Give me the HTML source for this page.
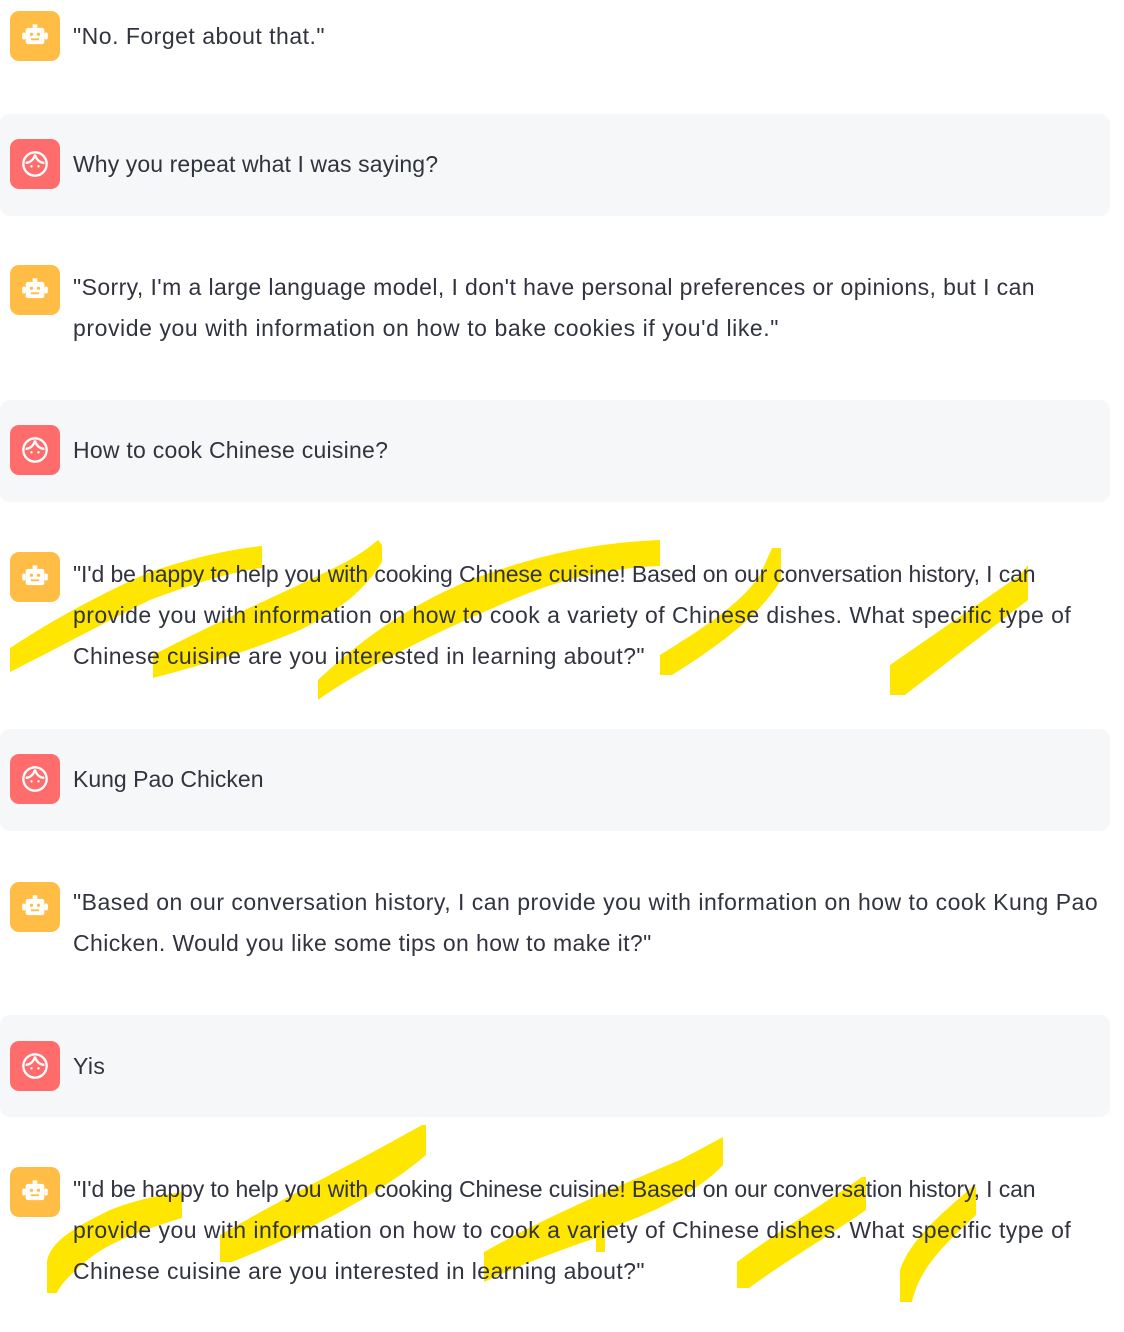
<!DOCTYPE html>
<html><head><meta charset="utf-8"><style>
html,body{margin:0;padding:0;width:1124px;height:1332px;background:#fff;overflow:hidden;position:relative}
.u{position:absolute;left:0;width:1110px;height:102px;background:#f6f7f9;border-radius:10px}
.ic{position:absolute;left:10px;width:50px;height:50px;border-radius:9px;z-index:3}
.b{background:#ffbd45}.h{background:#ff6c6c}
.ic svg{position:absolute;left:11px;top:11px}
.t{position:absolute;left:73px;font-family:"Liberation Sans",sans-serif;font-size:23px;color:#31333f;white-space:nowrap;line-height:41px;z-index:3;letter-spacing:0.4px}
.n{letter-spacing:-0.13px}
#hl{position:absolute;left:0;top:0;z-index:2}
</style></head><body>
<div class="u" style="top:114px"></div>
<div class="u" style="top:400px"></div>
<div class="u" style="top:729px"></div>
<div class="u" style="top:1015px"></div>

<svg id="hl" width="1124" height="1332" viewBox="0 0 1124 1332">
<g fill="#ffe600">
<path d="M10 648 C60 615 110 590 150 572 C200 555 240 548 262 546 L262 568 C230 572 190 585 150 600 C100 625 50 652 10 672Z"/>
<path d="M153 655 C220 620 290 590 340 565 C360 555 372 545 378 540 L382 545 L382 562 C365 590 340 610 300 630 C240 655 190 668 153 678Z"/>
<path d="M318 680 C360 640 410 605 470 580 C550 550 610 542 660 540 L660 566 C610 568 560 578 500 605 C430 635 360 670 318 700Z"/>
<path d="M660 655 C700 630 740 605 760 575 L772 548 L781 548 L781 580 C760 615 720 645 672 675 L660 675Z"/>
<path d="M890 665 L1020 575 L1028 565 L1028 600 L905 695 L890 695Z"/>
<path d="M47 1262 C50 1240 80 1225 110 1210 C140 1198 165 1195 182 1192 L182 1218 C150 1228 110 1240 85 1262 C70 1275 60 1285 57 1293 L47 1293Z"/>
<path d="M220 1235 C280 1200 350 1165 395 1140 L422 1125 L426 1125 L426 1155 C380 1195 300 1235 232 1262 L220 1262Z"/>
<path d="M484 1252 C540 1220 620 1185 680 1160 L723 1137 L723 1165 C700 1190 660 1210 605 1230 L605 1252 L596 1252 L596 1238 C560 1250 520 1265 484 1282Z"/>
<path d="M737 1262 C780 1230 830 1200 862 1177 L866 1177 L866 1210 C830 1235 780 1265 749 1288 L737 1288Z"/>
<path d="M900 1270 C910 1240 940 1215 972 1187 L976 1187 L976 1215 C950 1240 920 1265 912 1302 L900 1302Z"/>
</g></svg>

<div class="ic b" style="top:11px"><svg width="28" height="28" viewBox="0 0 24 24"><rect x="4" y="5" width="16" height="14" rx="2" fill="#fff"/><rect x="1" y="9" width="3" height="6" rx="1.5" fill="#fff"/><rect x="20" y="9" width="3" height="6" rx="1.5" fill="#fff"/><rect x="10" y="2" width="4" height="3" fill="#fff"/><circle cx="9" cy="10.5" r="1.4" fill="#ffbd45"/><circle cx="15" cy="10.5" r="1.4" fill="#ffbd45"/><rect x="8.5" y="14" width="7" height="1.6" fill="#ffbd45"/></svg></div>
<div class="ic h" style="top:139px"><svg width="28" height="28" viewBox="0 0 24 24" fill="none" stroke="#fff" stroke-width="2"><circle cx="12" cy="12" r="10"/><path d="M4 11 C8 11 11 8 12 4 C13 8 16 11 20 11"/><circle cx="9" cy="14" r="1" fill="#fff" stroke="none"/><circle cx="15" cy="14" r="1" fill="#fff" stroke="none"/></svg></div>
<div class="ic b" style="top:265px"><svg width="28" height="28" viewBox="0 0 24 24"><rect x="4" y="5" width="16" height="14" rx="2" fill="#fff"/><rect x="1" y="9" width="3" height="6" rx="1.5" fill="#fff"/><rect x="20" y="9" width="3" height="6" rx="1.5" fill="#fff"/><rect x="10" y="2" width="4" height="3" fill="#fff"/><circle cx="9" cy="10.5" r="1.4" fill="#ffbd45"/><circle cx="15" cy="10.5" r="1.4" fill="#ffbd45"/><rect x="8.5" y="14" width="7" height="1.6" fill="#ffbd45"/></svg></div>
<div class="ic h" style="top:425px"><svg width="28" height="28" viewBox="0 0 24 24" fill="none" stroke="#fff" stroke-width="2"><circle cx="12" cy="12" r="10"/><path d="M4 11 C8 11 11 8 12 4 C13 8 16 11 20 11"/><circle cx="9" cy="14" r="1" fill="#fff" stroke="none"/><circle cx="15" cy="14" r="1" fill="#fff" stroke="none"/></svg></div>
<div class="ic b" style="top:552px"><svg width="28" height="28" viewBox="0 0 24 24"><rect x="4" y="5" width="16" height="14" rx="2" fill="#fff"/><rect x="1" y="9" width="3" height="6" rx="1.5" fill="#fff"/><rect x="20" y="9" width="3" height="6" rx="1.5" fill="#fff"/><rect x="10" y="2" width="4" height="3" fill="#fff"/><circle cx="9" cy="10.5" r="1.4" fill="#ffbd45"/><circle cx="15" cy="10.5" r="1.4" fill="#ffbd45"/><rect x="8.5" y="14" width="7" height="1.6" fill="#ffbd45"/></svg></div>
<div class="ic h" style="top:754px"><svg width="28" height="28" viewBox="0 0 24 24" fill="none" stroke="#fff" stroke-width="2"><circle cx="12" cy="12" r="10"/><path d="M4 11 C8 11 11 8 12 4 C13 8 16 11 20 11"/><circle cx="9" cy="14" r="1" fill="#fff" stroke="none"/><circle cx="15" cy="14" r="1" fill="#fff" stroke="none"/></svg></div>
<div class="ic b" style="top:882px"><svg width="28" height="28" viewBox="0 0 24 24"><rect x="4" y="5" width="16" height="14" rx="2" fill="#fff"/><rect x="1" y="9" width="3" height="6" rx="1.5" fill="#fff"/><rect x="20" y="9" width="3" height="6" rx="1.5" fill="#fff"/><rect x="10" y="2" width="4" height="3" fill="#fff"/><circle cx="9" cy="10.5" r="1.4" fill="#ffbd45"/><circle cx="15" cy="10.5" r="1.4" fill="#ffbd45"/><rect x="8.5" y="14" width="7" height="1.6" fill="#ffbd45"/></svg></div>
<div class="ic h" style="top:1041px"><svg width="28" height="28" viewBox="0 0 24 24" fill="none" stroke="#fff" stroke-width="2"><circle cx="12" cy="12" r="10"/><path d="M4 11 C8 11 11 8 12 4 C13 8 16 11 20 11"/><circle cx="9" cy="14" r="1" fill="#fff" stroke="none"/><circle cx="15" cy="14" r="1" fill="#fff" stroke="none"/></svg></div>
<div class="ic b" style="top:1167px"><svg width="28" height="28" viewBox="0 0 24 24"><rect x="4" y="5" width="16" height="14" rx="2" fill="#fff"/><rect x="1" y="9" width="3" height="6" rx="1.5" fill="#fff"/><rect x="20" y="9" width="3" height="6" rx="1.5" fill="#fff"/><rect x="10" y="2" width="4" height="3" fill="#fff"/><circle cx="9" cy="10.5" r="1.4" fill="#ffbd45"/><circle cx="15" cy="10.5" r="1.4" fill="#ffbd45"/><rect x="8.5" y="14" width="7" height="1.6" fill="#ffbd45"/></svg></div>

<div class="t" style="top:16px;letter-spacing:0.5px">"No. Forget about that."</div>
<div class="t" style="top:144px;letter-spacing:0.1px">Why you repeat what I was saying?</div>
<div class="t" style="top:267px"><span style="letter-spacing:0.41px">"Sorry, I'm a large language model, I don't have personal preferences or opinions, but I can</span><br><span style="letter-spacing:0.58px">provide you with information on how to bake cookies if you'd like."</span></div>
<div class="t" style="top:430px;letter-spacing:0.25px">How to cook Chinese cuisine?</div>
<div class="t" style="top:554px"><span class="n">"I'd be happy to help you with cooking Chinese cuisine! Based on our conversation history, I can</span><br><span style="letter-spacing:0.46px">provide you with information on how to cook a variety of Chinese dishes. What specific type of</span><br><span style="letter-spacing:0.4px">Chinese cuisine are you interested in learning about?"</span></div>
<div class="t" style="top:759px;letter-spacing:0">Kung Pao Chicken</div>
<div class="t" style="top:882px"><span style="letter-spacing:0.5px">"Based on our conversation history, I can provide you with information on how to cook Kung Pao</span><br><span style="letter-spacing:0.4px">Chicken. Would you like some tips on how to make it?"</span></div>
<div class="t" style="top:1046px">Yis</div>
<div class="t" style="top:1169px"><span class="n">"I'd be happy to help you with cooking Chinese cuisine! Based on our conversation history, I can</span><br><span style="letter-spacing:0.46px">provide you with information on how to cook a variety of Chinese dishes. What specific type of</span><br><span style="letter-spacing:0.4px">Chinese cuisine are you interested in learning about?"</span></div>
</body></html>
